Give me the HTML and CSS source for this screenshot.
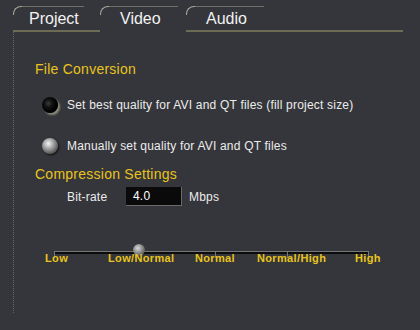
FILE: index.html
```html
<html>
<head>
    <meta charset="UTF-8"/>
    <title>Video</title>
    <link rel="stylesheet" href="styles.css">
</head>
<body>
    <div class="tabs">
        <div class="slot slot-project"><div class="tab">Project</div></div>
        <div class="slot slot-video live"><div class="tab">Video</div></div>
        <div class="slot slot-audio"><div class="tab">Audio</div></div>
    </div>
    <div class="panel">
        <div class="head">File Conversion</div>
        <div class="option first">
            <div class="radio radio-on"></div>
            <div>Set best quality for AVI and QT files (fill project size)</div>
        </div>
        <div class="option second">
            <div class="radio radio-off"></div>
            <div>Manually set quality for AVI and QT files</div>
        </div>
        <div class="head head-comp">Compression Settings</div>
        <div class="rate">
            <div class="rate-label">Bit-rate</div>
            <div class="rate-box">4.0</div>
            <div class="rate-unit">Mbps</div>
        </div>
        <div class="scale">
            <div class="track"></div>
            <div class="tick t0"></div>
            <div class="tick t1"></div>
            <div class="tick t2"></div>
            <div class="tick t3"></div>
            <div class="tick t4"></div>
            <div class="thumb"></div>
            <div class="mark m0">Low</div>
            <div class="mark m1">Low/Normal</div>
            <div class="mark m2">Normal</div>
            <div class="mark m3">Normal/High</div>
            <div class="mark m4">High</div>
        </div>
    </div>
</body>
</html>
```

FILE: styles.css
```css
body {
    font-family: "Liberation Sans", Arial, sans-serif;
    margin: 0px;
    padding: 0px;
    color: #ececec;
    background-color: #35363b;
}

.tabs {
    display: flex;
    width: 390px;
    margin-left: 13px;
    padding-top: 6px;
}

.slot {
    border-bottom: solid 2px #6c6b56;
}
.slot-project {
    width: 87px;
}
.slot-video {
    width: 86px;
}
.slot-audio {
    flex: auto;
}
.slot.live {
    border-bottom-color: transparent;
}

.tab {
    position: relative;
    width: 58px;
    margin-left: 8px;
    padding-top: 1px;
    padding-left: 12px;
    border-top: solid 1px #707068;
    font-size: 16px;
    line-height: 22px;
    color: #f2f2f2;
}
.tab::before {
    content: "";
    position: absolute;
    left: -8px;
    top: -1px;
    width: 8px;
    height: 8px;
    border-top: solid 1px #a8a898;
    border-left: solid 1px #a8a898;
    border-top-left-radius: 8px;
}
.slot-project .tab {
    width: 55px;
    padding-left: 8px;
}

.panel {
    height: 281px;
    margin-left: 13px;
    padding-left: 21px;
    border-left: dotted 1px #66666a;
}

.head {
    padding-top: 29px;
    font-size: 14px;
    line-height: 16px;
    letter-spacing: 0.25px;
    color: #e8c41c;
}
.head-comp {
    padding-top: 12px;
}

.option {
    display: flex;
    align-items: center;
    font-size: 12px;
    line-height: 16px;
    letter-spacing: 0.2px;
}
.option.first {
    margin-top: 20px;
}
.option.second {
    margin-top: 25px;
}

.radio {
    width: 16px;
    height: 16px;
    margin-left: 7px;
    margin-right: 9px;
    border-radius: 50%;
}
.radio-on {
    background: radial-gradient(circle at 40% 40%, #3a3a3a 0%, #111 30%, #000 60%);
    box-shadow: 2px 2px 2px #8a8a78;
}
.radio-off {
    background: radial-gradient(circle at 40% 35%, #f4f4f4 0%, #b0b0b0 30%, #5a5a5a 70%, #202020 100%);
    box-shadow: 1px 1px 2px #111;
}

.rate {
    display: flex;
    align-items: center;
    margin-top: 5px;
    font-size: 12px;
    letter-spacing: 0.2px;
}
.rate-label {
    width: 59px;
    margin-left: 32px;
}
.rate-box {
    width: 48px;
    height: 18px;
    padding-left: 7px;
    line-height: 18px;
    color: #fff;
    background-color: #0a0a0a;
    border-right: solid 1px #6a6a6a;
    border-bottom: solid 1px #6a6a6a;
}
.rate-unit {
    margin-left: 7px;
}

.scale {
    position: relative;
    width: 314px;
    height: 22px;
    margin-top: 37px;
    margin-left: 19px;
}

.track {
    position: absolute;
    left: 0px;
    right: 0px;
    top: 8px;
    height: 2px;
    border-top: solid 1px #77777a;
    background-color: #0c0c0c;
}

.tick {
    position: absolute;
    top: 8px;
    width: 1px;
    height: 7px;
    background-color: #77777a;
}
.t0 {left: 0px; }
.t1 {left: 81px; }
.t2 {left: 161px; }
.t3 {left: 233px; }
.t4 {left: 314px; }

.thumb {
    position: absolute;
    left: 79px;
    top: 1px;
    width: 12px;
    height: 12px;
    border-radius: 50%;
    background: radial-gradient(circle at 40% 35%, #d8d8d8 0%, #9a9a9a 35%, #555 75%, #2a2a2a 100%);
}

.mark {
    position: absolute;
    top: 9px;
    font-size: 11px;
    font-weight: bold;
    line-height: 13px;
    letter-spacing: 0.35px;
    color: #e8c41c;
    white-space: nowrap;
}
.m0 {left: -9px; }
.m1 {left: 54px; }
.m2 {left: 141px; }
.m3 {left: 203px; }
.m4 {left: 301px; }
```
